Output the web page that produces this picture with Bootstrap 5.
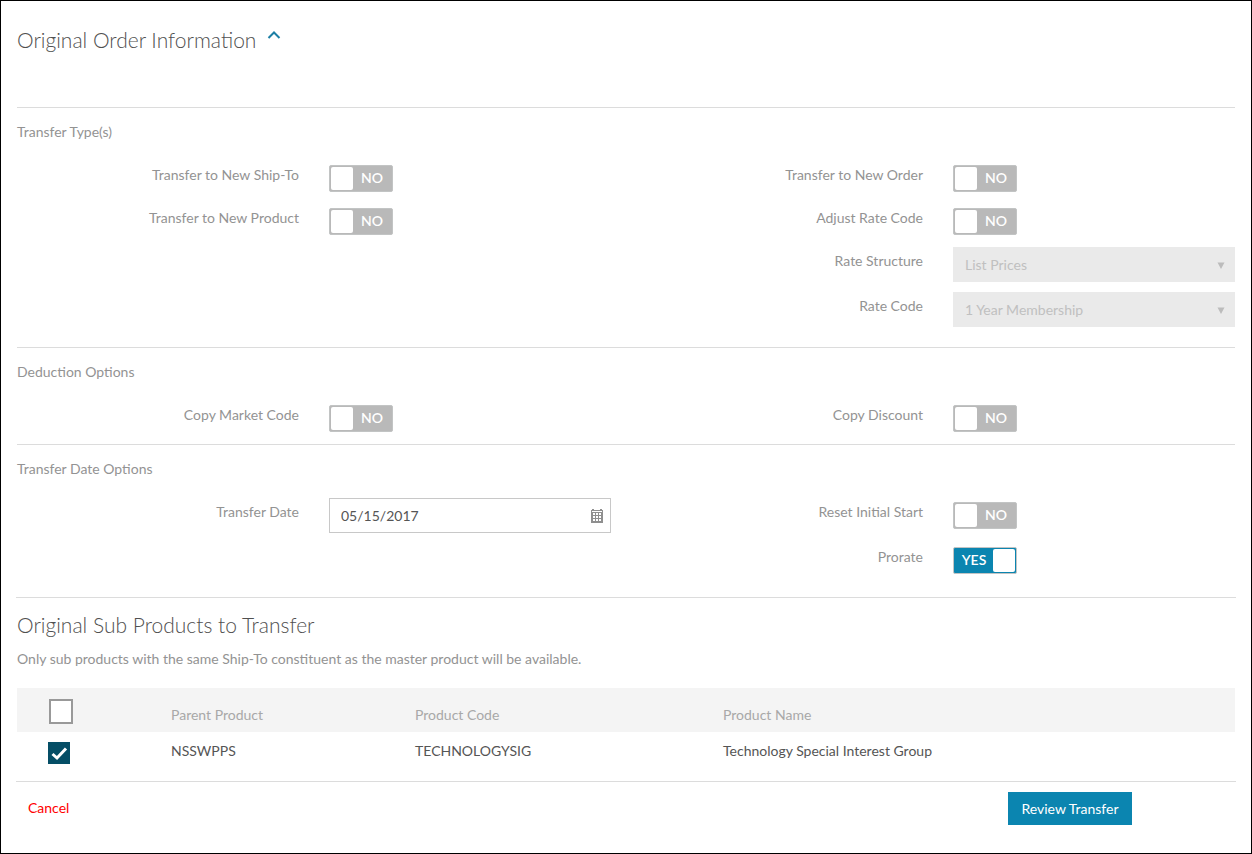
<!DOCTYPE html>
<html lang="en">
<head>
<meta charset="utf-8">
<meta name="viewport" content="width=device-width, initial-scale=1">
<title>Transfer Order</title>
<link href="https://cdn.jsdelivr.net/npm/bootstrap@5.3.0/dist/css/bootstrap.min.css" rel="stylesheet">
<style>
  body { font-family: Lato, "Liberation Sans", sans-serif; font-size: 14px; line-height: 20px; color: #939393; background: #fff; }
  .page-frame { border: 1px solid #000; padding: 0 16px; }
  .row { --bs-gutter-x: 30px; }
  .page-title { font-size: 21px; line-height: 30px; font-weight: 300; color: #505050; margin: 0; }
  .title-bar { padding-top: 24px; padding-bottom: 52px; }
  .collapse-btn { width: 14px; height: 10px; margin: 5px 0 0 11px; padding: 0; border: 0; background: none; }
  .option-group { border-top: 1px solid #dcdcdc; padding-top: 14px; }
  .option-group.roomy { padding-bottom: 10px; }
  .group-title { font-size: 14px; line-height: 20px; font-weight: 400; margin: 0 0 19px; }
  .field-label { padding-top: 4px; text-align: right; }
  .field { height: 35px; width: 100%; padding: 0 12px; border-radius: 0; font-family: inherit; font-size: 14px; margin-bottom: 10px; display: block; }
  .field-date { border: 1px solid #c8c8c8; padding: 0 11px; color: #555; background: #fff; }
  .field-select { border: 0; appearance: none; background: #eaeaea; color: #c0c0c0; opacity: 1; }
  .field-icon { position: absolute; pointer-events: none; }
  .arrow-icon { right: 10px; top: 15px; }
  .calendar-icon { right: 8px; top: 11px; border: 0; padding: 0; background: none; line-height: 0; pointer-events: auto; }
  .toggle { position: relative; display: block; width: 64px; margin: 4px 0 12px; }
  .toggle input { position: absolute; inset: 0; width: 100%; height: 100%; margin: 0; opacity: 0; cursor: pointer; }
  .track { display: flex; height: 27px; padding: 1px; border: 1px solid #c2c4c4; border-radius: 2px; background: #b9b9b9; color: #fff; line-height: 22px; }
  .track .knob { width: 22px; background: #fff; border-radius: 2px; }
  .track .word { flex: 1; text-align: center; font-weight: 600; }
  .track .yes { display: none; }
  input:checked + .track { background: #0b85b0; flex-direction: row-reverse; }
  input:checked + .track .yes { display: block; }
  input:checked + .track .no { display: none; }
  .sub-products { border-top: 1px solid #dcdcdc; border-bottom: 1px solid #dcdcdc; padding: 12px 1px 0; margin: 1px -1px 0; }
  .note { margin: 9px 0 19px; }
  .product-table { table-layout: fixed; width: 100%; }
  .product-table th, .product-table td { padding: 0 8px; vertical-align: top; }
  .product-table th { font-weight: 400; color: #a8a8a8; background: #f4f4f4; height: 44px; padding-top: 17px; }
  .product-table td { color: #555; height: 49px; padding-top: 9px; }
  .product-table .pick { padding: 10px 0 0 31px; }
  .product-table th.pick { padding: 11px 0 0 32px; }
  .col-pick { width: 146px; } .col-parent { width: 244px; } .col-code { width: 308px; }
  .tick { appearance: none; display: block; margin: 0; width: 22px; height: 22px; border: 2px solid #999; background: #fff; }
  thead .tick { width: 24px; height: 25px; }
  .tick:checked { border: 0; background: #054e66 url("data:image/svg+xml,%3Csvg xmlns='http://www.w3.org/2000/svg' viewBox='0 0 22 22'%3E%3Cpath d='M4.500 12L9 16L18 6.500' fill='none' stroke='white' stroke-width='3'/%3E%3C/svg%3E"); }
  .actions { padding: 10px 103px 28px 11px; }
  .cancel-link { color: #f00; text-decoration: none; margin-top: 6px; }
  .btn-review { height: 33px; min-width: 124px; padding: 0 13px; border: 0; border-radius: 0; background: #0b85b0; color: #fff; font-size: 14px; line-height: 20px; }
</style>
</head>
<body>
<main class="page-frame min-vh-100">
  <header class="title-bar d-flex align-items-start">
    <h1 class="page-title">Original Order Information</h1>
    <button type="button" class="collapse-btn d-flex" aria-label="Collapse">
      <svg width="14" height="10" viewBox="0 0 14 10"><path d="M1.500 8L7 2.500L12.500 8" fill="none" stroke="#1d7fa5" stroke-width="2"/></svg>
    </button>
  </header>

  <form>
    <section class="option-group roomy">
      <h2 class="group-title">Transfer Type(s)</h2>
      <div class="row">
        <div class="col-6"><div class="row">
          <label class="col-6 field-label" for="shipTo">Transfer to New Ship-To</label>
          <div class="col-6"><div class="toggle"><input type="checkbox" role="switch" id="shipTo"><span class="track"><span class="knob"></span><span class="word no">NO</span><span class="word yes">YES</span></span></div></div>
        </div></div>
        <div class="col-6"><div class="row">
          <label class="col-6 field-label" for="newOrder">Transfer to New Order</label>
          <div class="col-6"><div class="toggle"><input type="checkbox" role="switch" id="newOrder"><span class="track"><span class="knob"></span><span class="word no">NO</span><span class="word yes">YES</span></span></div></div>
        </div></div>
      </div>
      <div class="row">
        <div class="col-6"><div class="row">
          <label class="col-6 field-label" for="newProduct">Transfer to New Product</label>
          <div class="col-6"><div class="toggle"><input type="checkbox" role="switch" id="newProduct"><span class="track"><span class="knob"></span><span class="word no">NO</span><span class="word yes">YES</span></span></div></div>
        </div></div>
        <div class="col-6"><div class="row">
          <label class="col-6 field-label" for="adjustRate">Adjust Rate Code</label>
          <div class="col-6"><div class="toggle"><input type="checkbox" role="switch" id="adjustRate"><span class="track"><span class="knob"></span><span class="word no">NO</span><span class="word yes">YES</span></span></div></div>
        </div></div>
      </div>
      <div class="row justify-content-end">
        <div class="col-6"><div class="row">
          <label class="col-6 field-label" for="rateStructure">Rate Structure</label>
          <div class="col-6"><div class="position-relative">
            <select class="field field-select" id="rateStructure" disabled><option>List Prices</option></select>
            <svg class="field-icon arrow-icon" width="8" height="7" viewBox="0 0 8 7"><path d="M0.500 0.500H7.500L4 7Z" fill="#bcbcbc"/></svg>
          </div></div>
        </div></div>
      </div>
      <div class="row justify-content-end">
        <div class="col-6"><div class="row">
          <label class="col-6 field-label" for="rateCode">Rate Code</label>
          <div class="col-6"><div class="position-relative">
            <select class="field field-select" id="rateCode" disabled><option>1 Year Membership</option></select>
            <svg class="field-icon arrow-icon" width="8" height="7" viewBox="0 0 8 7"><path d="M0.500 0.500H7.500L4 7Z" fill="#bcbcbc"/></svg>
          </div></div>
        </div></div>
      </div>
    </section>

    <section class="option-group">
      <h2 class="group-title">Deduction Options</h2>
      <div class="row">
        <div class="col-6"><div class="row">
          <label class="col-6 field-label" for="copyMarket">Copy Market Code</label>
          <div class="col-6"><div class="toggle"><input type="checkbox" role="switch" id="copyMarket"><span class="track"><span class="knob"></span><span class="word no">NO</span><span class="word yes">YES</span></span></div></div>
        </div></div>
        <div class="col-6"><div class="row">
          <label class="col-6 field-label" for="copyDiscount">Copy Discount</label>
          <div class="col-6"><div class="toggle"><input type="checkbox" role="switch" id="copyDiscount"><span class="track"><span class="knob"></span><span class="word no">NO</span><span class="word yes">YES</span></span></div></div>
        </div></div>
      </div>
    </section>

    <section class="option-group roomy">
      <h2 class="group-title">Transfer Date Options</h2>
      <div class="row">
        <div class="col-6"><div class="row">
          <label class="col-6 field-label" for="transferDate">Transfer Date</label>
          <div class="col-6"><div class="position-relative">
            <input type="text" class="field field-date" id="transferDate" value="05/15/2017">
            <button type="button" class="field-icon calendar-icon" aria-label="Open calendar">
              <svg width="12" height="14" viewBox="0 0 12 14" shape-rendering="crispEdges"><path d="M1 0h2v1h6v-1h2v1h1v13H0V1h1z" fill="#8f8f8f"/><path d="M1 2h10v1H1zM2 4h2v2H2zM5 4h2v2H5zM8 4h2v2H8zM2 7h2v2H2zM5 7h2v2H5zM8 7h2v2H8zM2 10h2v2H2zM5 10h2v2H5zM8 10h2v2H8z" fill="#fff"/></svg>
            </button>
          </div></div>
        </div></div>
        <div class="col-6"><div class="row">
          <label class="col-6 field-label" for="resetStart">Reset Initial Start</label>
          <div class="col-6"><div class="toggle"><input type="checkbox" role="switch" id="resetStart"><span class="track"><span class="knob"></span><span class="word no">NO</span><span class="word yes">YES</span></span></div></div>
        </div></div>
      </div>
      <div class="row justify-content-end">
        <div class="col-6"><div class="row">
          <label class="col-6 field-label" for="prorate">Prorate</label>
          <div class="col-6"><div class="toggle"><input type="checkbox" role="switch" id="prorate" checked><span class="track"><span class="knob"></span><span class="word no">NO</span><span class="word yes">YES</span></span></div></div>
        </div></div>
      </div>
    </section>

    <section class="sub-products">
      <h2 class="page-title">Original Sub Products to Transfer</h2>
      <p class="note">Only sub products with the same Ship-To constituent as the master product will be available.</p>
      <table class="product-table">
        <colgroup><col class="col-pick"><col class="col-parent"><col class="col-code"><col></colgroup>
        <thead>
          <tr>
            <th class="pick"><input type="checkbox" class="tick" aria-label="Select all sub products"></th>
            <th scope="col">Parent Product</th><th scope="col">Product Code</th><th scope="col">Product Name</th>
          </tr>
        </thead>
        <tbody>
          <tr>
            <td class="pick"><input type="checkbox" class="tick" aria-label="Select TECHNOLOGYSIG" checked></td>
            <td>NSSWPPS</td><td>TECHNOLOGYSIG</td><td>Technology Special Interest Group</td>
          </tr>
        </tbody>
      </table>
    </section>

    <footer class="actions d-flex justify-content-between align-items-start">
      <a href="#" class="cancel-link">Cancel</a>
      <button type="button" class="btn btn-review">Review Transfer</button>
    </footer>
  </form>
</main>
<script src="https://cdn.jsdelivr.net/npm/bootstrap@5.3.0/dist/js/bootstrap.bundle.min.js"></script>
</body>
</html>
